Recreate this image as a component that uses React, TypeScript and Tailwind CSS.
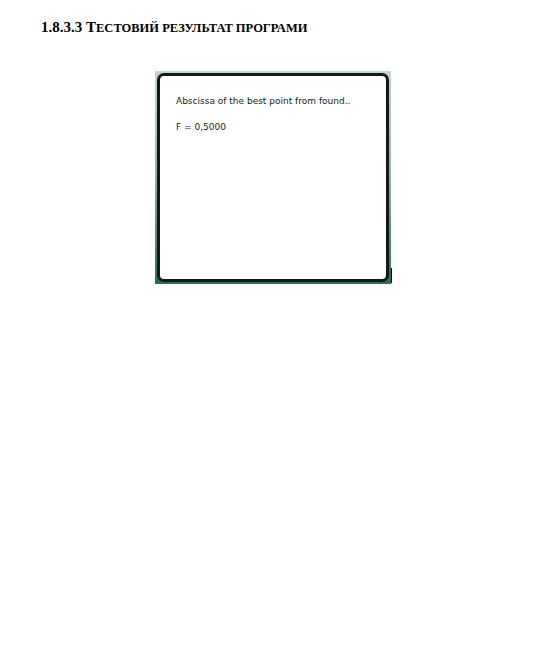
export default function App() {
  return (
    <div className="min-h-screen bg-white">
      <div className="pl-[41px] pt-[19px]">
        <h1
          className="font-bold text-black leading-none"
          style={{ fontFamily: '"Liberation Serif", "Times New Roman", serif' }}
        >
          <span className="text-[15px]">1.8.3.3 Т</span>
          <span className="text-[12.5px]">ЕСТОВИЙ РЕЗУЛЬТАТ ПРОГРАМИ</span>
        </h1>
      </div>

      <div className="mt-[36px] ml-[155px] flex items-end">
        <div className="w-[236px] h-[213px] p-[2px] bg-gradient-to-b from-[#c4d3cf] via-[#8fb0a8] to-[#2b6a5c]">
          <div className="h-full rounded-[7px] border-[3px] border-[#121814] bg-white px-[16px] pt-[20px]">
            <div
              className="text-[9px] leading-[11px] text-[#1a1a1a]"
              style={{ fontFamily: '"DejaVu Sans", Verdana, sans-serif' }}
            >
              <p>Abscissa of the best point from found..</p>
              <p className="mt-[15px]">F = 0,5000</p>
            </div>
          </div>
        </div>
        <div className="w-px h-[15px] bg-black mb-[1px]" />
      </div>
    </div>
  );
}
